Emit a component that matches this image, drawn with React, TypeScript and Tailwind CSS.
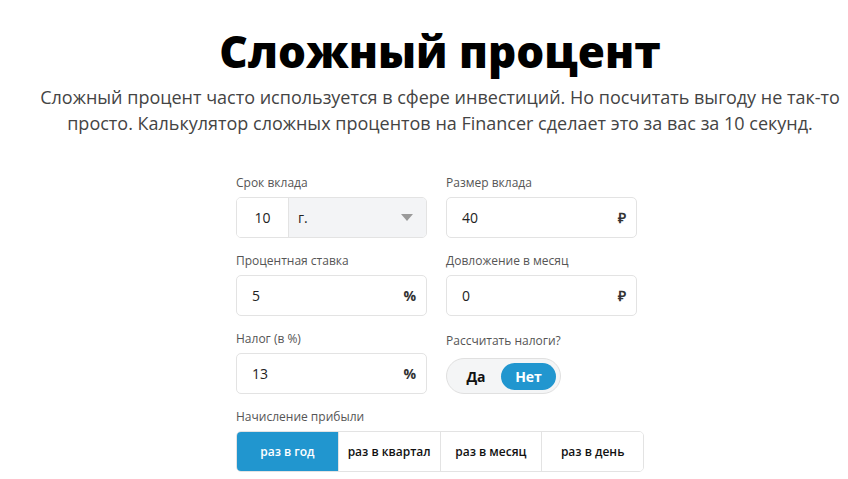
import React, { useState } from "react";

const periods = ["раз в год", "раз в квартал", "раз в месяц", "раз в день"];

function Field({ label, children }: { label: string; children: React.ReactNode }) {
  return (
    <div>
      <div className="text-[12px] leading-4 text-[#555] mb-[6px]">{label}</div>
      {children}
    </div>
  );
}

function SuffixInput({ value, suffix }: { value: string; suffix: string }) {
  return (
    <div className="flex items-center h-[41px] border border-[#e3e3e3] rounded-[5px] bg-white pl-[15px] pr-[10px]">
      <span className="flex-1 text-[14px] text-[#222]">{value}</span>
      <span className="text-[14px] font-bold text-[#333]">{suffix}</span>
    </div>
  );
}

export default function App() {
  const [tax, setTax] = useState(false);
  const [period, setPeriod] = useState(0);

  return (
    <div className="min-h-screen bg-white font-['Open_Sans',sans-serif] pl-[32px]">
      <div className="flex flex-col items-center">
        <h1 className="mt-[23px] text-[44px] leading-[56px] font-extrabold text-black">
          Сложный процент
        </h1>
        <p className="mt-[5px] text-[18px] leading-[26px] text-[#444] text-center max-w-[816px]">
          Сложный процент часто используется в сфере инвестиций. Но посчитать выгоду не так-то
          просто. Калькулятор сложных процентов на Financer сделает это за вас за 10 секунд.
        </p>

        <div className="mt-[39px] w-[408px]">
          <div className="grid grid-cols-[191px_191px] gap-x-[19px] gap-y-[15px]">
            <Field label="Срок вклада">
              <div className="flex h-[41px] border border-[#e3e3e3] rounded-[5px] overflow-hidden">
                <div className="w-[52px] flex items-center justify-center bg-white text-[14px] text-[#222] border-r border-[#e3e3e3]">
                  10
                </div>
                <div className="flex-1 flex items-center justify-between bg-[#f3f4f6] pl-[9px] pr-[13px] text-[14px] text-[#222]">
                  <span>г.</span>
                  <svg width="12" height="7" viewBox="0 0 12 7">
                    <path d="M0 0h12L6 7z" fill="#9a9a9a" />
                  </svg>
                </div>
              </div>
            </Field>
            <Field label="Размер вклада">
              <SuffixInput value="40" suffix="₽" />
            </Field>
            <Field label="Процентная ставка">
              <SuffixInput value="5" suffix="%" />
            </Field>
            <Field label="Довложение в месяц">
              <SuffixInput value="0" suffix="₽" />
            </Field>
            <Field label="Налог (в %)">
              <SuffixInput value="13" suffix="%" />
            </Field>
            <div>
              <div className="text-[12px] leading-4 text-[#555] mt-[2px] mb-[9px]">Рассчитать налоги?</div>
              <div className="flex items-center w-[115px] h-[36px] rounded-full border border-[#e0e0e0] bg-[#f4f5f6] px-[4px]">
                <button
                  onClick={() => setTax(true)}
                  className={`flex-1 h-[27px] rounded-full text-[14px] font-bold ${
                    tax ? "bg-[#2196cf] text-white" : "text-[#111]"
                  }`}
                >
                  Да
                </button>
                <button
                  onClick={() => setTax(false)}
                  className={`w-[55px] h-[27px] rounded-full text-[14px] font-bold ${
                    !tax ? "bg-[#2196cf] text-white" : "text-[#111]"
                  }`}
                >
                  Нет
                </button>
              </div>
            </div>
          </div>

          <div className="mt-[15px]">
            <div className="text-[12px] leading-4 text-[#555] mb-[6px]">Начисление прибыли</div>
            <div className="flex h-[41px] border border-[#e3e3e3] rounded-[5px] overflow-hidden">
              {periods.map((p, i) => (
                <button
                  key={p}
                  onClick={() => setPeriod(i)}
                  className={`flex-1 text-[12px] font-semibold ${
                    i > 0 ? "border-l border-[#e3e3e3]" : ""
                  } ${period === i ? "bg-[#2196cf] text-white" : "bg-white text-[#111]"}`}
                >
                  {p}
                </button>
              ))}
            </div>
          </div>
        </div>
      </div>
    </div>
  );
}
